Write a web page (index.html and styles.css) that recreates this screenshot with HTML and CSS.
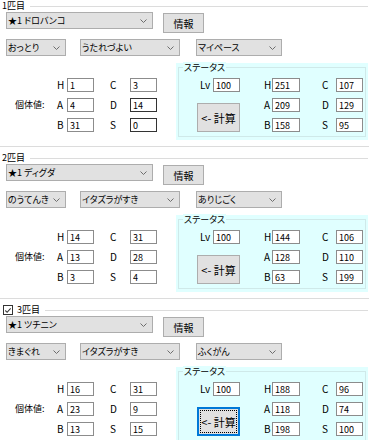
FILE: index.html
```html
<!DOCTYPE html>
<html lang="ja">
<head>
    <meta charset="UTF-8">
    <meta name="viewport" content="width=device-width, initial-scale=1.0">
    <title>パーティ</title>
    <link rel="stylesheet" href="styles.css">
</head>

<body>
    <!-- 1匹目 -->
    <section class="slot">
        <div class="slot-title"><span class="slot-name">1匹目</span></div>
        <div class="row-main">
            <div class="combo combo-name"><span>★1 ドロバンコ</span><svg class="chev" width="7" height="4" viewBox="0 0 7 4"><polyline points="0.5,0.5 3.5,3.5 6.5,0.5"/></svg></div>
            <button class="btn-info">情報</button>
        </div>
        <div class="row-sub">
            <div class="combo combo-nature"><span>おっとり</span><svg class="chev" width="7" height="4" viewBox="0 0 7 4"><polyline points="0.5,0.5 3.5,3.5 6.5,0.5"/></svg></div>
            <div class="combo combo-ability"><span>うたれづよい</span><svg class="chev" width="7" height="4" viewBox="0 0 7 4"><polyline points="0.5,0.5 3.5,3.5 6.5,0.5"/></svg></div>
            <div class="combo combo-trait"><span>マイペース</span><svg class="chev" width="7" height="4" viewBox="0 0 7 4"><polyline points="0.5,0.5 3.5,3.5 6.5,0.5"/></svg></div>
        </div>
        <div class="row-stats">
            <div class="ivs">
                <span class="ivs-label">個体値:</span>
                <div class="iv-col">
                    <label class="pair"><span class="key">H</span><input type="text" value="1"></label>
                    <label class="pair"><span class="key">A</span><input type="text" value="4"></label>
                    <label class="pair"><span class="key">B</span><input type="text" value="31"></label>
                </div>
                <div class="iv-col iv-col-right">
                    <label class="pair"><span class="key">C</span><input type="text" value="3"></label>
                    <label class="pair"><span class="key">D</span><input type="text" class="dark" value="14"></label>
                    <label class="pair"><span class="key">S</span><input type="text" class="dark" value="0"></label>
                </div>
            </div>
            <div class="status">
                <span class="status-title">ステータス</span>
                <div class="status-lv">
                    <label class="pair"><span class="key">Lv</span><input type="text" value="100"></label>
                    <button class="btn-calc">&lt;- 計算</button>
                </div>
                <div class="stat-col">
                    <label class="pair"><span class="key">H</span><input type="text" value="251"></label>
                    <label class="pair"><span class="key">A</span><input type="text" value="209"></label>
                    <label class="pair"><span class="key">B</span><input type="text" value="158"></label>
                </div>
                <div class="stat-col stat-col-right">
                    <label class="pair"><span class="key">C</span><input type="text" value="107"></label>
                    <label class="pair"><span class="key">D</span><input type="text" value="129"></label>
                    <label class="pair"><span class="key">S</span><input type="text" value="95"></label>
                </div>
            </div>
        </div>
    </section>

    <!-- 2匹目 -->
    <section class="slot">
        <div class="slot-title"><span class="slot-name">2匹目</span></div>
        <div class="row-main">
            <div class="combo combo-name"><span>★1 ディグダ</span><svg class="chev" width="7" height="4" viewBox="0 0 7 4"><polyline points="0.5,0.5 3.5,3.5 6.5,0.5"/></svg></div>
            <button class="btn-info">情報</button>
        </div>
        <div class="row-sub">
            <div class="combo combo-nature"><span>のうてんき</span><svg class="chev" width="7" height="4" viewBox="0 0 7 4"><polyline points="0.5,0.5 3.5,3.5 6.5,0.5"/></svg></div>
            <div class="combo combo-ability"><span>イタズラがすき</span><svg class="chev" width="7" height="4" viewBox="0 0 7 4"><polyline points="0.5,0.5 3.5,3.5 6.5,0.5"/></svg></div>
            <div class="combo combo-trait"><span>ありじごく</span><svg class="chev" width="7" height="4" viewBox="0 0 7 4"><polyline points="0.5,0.5 3.5,3.5 6.5,0.5"/></svg></div>
        </div>
        <div class="row-stats">
            <div class="ivs">
                <span class="ivs-label">個体値:</span>
                <div class="iv-col">
                    <label class="pair"><span class="key">H</span><input type="text" value="14"></label>
                    <label class="pair"><span class="key">A</span><input type="text" value="13"></label>
                    <label class="pair"><span class="key">B</span><input type="text" value="3"></label>
                </div>
                <div class="iv-col iv-col-right">
                    <label class="pair"><span class="key">C</span><input type="text" value="31"></label>
                    <label class="pair"><span class="key">D</span><input type="text" value="28"></label>
                    <label class="pair"><span class="key">S</span><input type="text" value="4"></label>
                </div>
            </div>
            <div class="status">
                <span class="status-title">ステータス</span>
                <div class="status-lv">
                    <label class="pair"><span class="key">Lv</span><input type="text" value="100"></label>
                    <button class="btn-calc">&lt;- 計算</button>
                </div>
                <div class="stat-col">
                    <label class="pair"><span class="key">H</span><input type="text" value="144"></label>
                    <label class="pair"><span class="key">A</span><input type="text" value="128"></label>
                    <label class="pair"><span class="key">B</span><input type="text" value="63"></label>
                </div>
                <div class="stat-col stat-col-right">
                    <label class="pair"><span class="key">C</span><input type="text" value="106"></label>
                    <label class="pair"><span class="key">D</span><input type="text" value="110"></label>
                    <label class="pair"><span class="key">S</span><input type="text" value="199"></label>
                </div>
            </div>
        </div>
    </section>

    <!-- 3匹目 -->
    <section class="slot">
        <div class="slot-title">
            <span class="check"><svg width="9" height="9" viewBox="0 0 9 9"><polyline points="1.5,4.5 3.5,6.5 7.5,2"/></svg></span>
            <span class="slot-name">3匹目</span>
        </div>
        <div class="row-main">
            <div class="combo combo-name"><span>★1 ツチニン</span><svg class="chev" width="7" height="4" viewBox="0 0 7 4"><polyline points="0.5,0.5 3.5,3.5 6.5,0.5"/></svg></div>
            <button class="btn-info">情報</button>
        </div>
        <div class="row-sub">
            <div class="combo combo-nature"><span>きまぐれ</span><svg class="chev" width="7" height="4" viewBox="0 0 7 4"><polyline points="0.5,0.5 3.5,3.5 6.5,0.5"/></svg></div>
            <div class="combo combo-ability"><span>イタズラがすき</span><svg class="chev" width="7" height="4" viewBox="0 0 7 4"><polyline points="0.5,0.5 3.5,3.5 6.5,0.5"/></svg></div>
            <div class="combo combo-trait"><span>ふくがん</span><svg class="chev" width="7" height="4" viewBox="0 0 7 4"><polyline points="0.5,0.5 3.5,3.5 6.5,0.5"/></svg></div>
        </div>
        <div class="row-stats">
            <div class="ivs">
                <span class="ivs-label">個体値:</span>
                <div class="iv-col">
                    <label class="pair"><span class="key">H</span><input type="text" value="16"></label>
                    <label class="pair"><span class="key">A</span><input type="text" value="23"></label>
                    <label class="pair"><span class="key">B</span><input type="text" value="13"></label>
                </div>
                <div class="iv-col iv-col-right">
                    <label class="pair"><span class="key">C</span><input type="text" value="31"></label>
                    <label class="pair"><span class="key">D</span><input type="text" value="9"></label>
                    <label class="pair"><span class="key">S</span><input type="text" value="15"></label>
                </div>
            </div>
            <div class="status">
                <span class="status-title">ステータス</span>
                <div class="status-lv">
                    <label class="pair"><span class="key">Lv</span><input type="text" value="100"></label>
                    <button class="btn-calc focused">&lt;- 計算</button>
                </div>
                <div class="stat-col">
                    <label class="pair"><span class="key">H</span><input type="text" value="188"></label>
                    <label class="pair"><span class="key">A</span><input type="text" value="118"></label>
                    <label class="pair"><span class="key">B</span><input type="text" value="198"></label>
                </div>
                <div class="stat-col stat-col-right">
                    <label class="pair"><span class="key">C</span><input type="text" value="96"></label>
                    <label class="pair"><span class="key">D</span><input type="text" value="74"></label>
                    <label class="pair"><span class="key">S</span><input type="text" value="100"></label>
                </div>
            </div>
        </div>
    </section>
</body>
</html>
```

FILE: styles.css
```css
body {
    margin: 0;
    background: #fff;
    color: #000;
    font-family: "Noto Sans CJK JP", "Noto Sans", sans-serif;
    font-size: 9px;
    font-feature-settings: "palt";
    overflow: hidden;
}

.slot {
    height: 147px;
    box-sizing: border-box;
    padding-bottom: 6px;
    border-bottom: 1px solid #dcdcdc;
    margin-bottom: 5px;
}

.slot-title {
    display: flex;
    align-items: center;
    height: 12px;
    padding-left: 2px;
}

.slot-title::after {
    content: "";
    flex: 1;
    height: 0;
    border-top: 1px solid #dcdcdc;
    margin: 0 1px 0 5px;
}

.slot-name {
    line-height: 12px;
}

.check {
    width: 10px;
    height: 10px;
    box-sizing: border-box;
    border: 1px solid #333;
    background: #fff;
    margin: 0 4px 0 1px;
    display: flex;
    align-items: center;
    justify-content: center;
}

.check svg {
    fill: none;
    stroke: #333;
    stroke-width: 1.2;
}

.row-main,
.row-sub {
    display: flex;
    align-items: flex-start;
    padding-left: 6px;
}

.row-main {
    gap: 10px;
    height: 21px;
}

.row-sub {
    margin-top: 6px;
}

.combo {
    height: 17px;
    box-sizing: border-box;
    border: 1px solid #adadad;
    background: #e1e1e1;
    display: flex;
    align-items: center;
    justify-content: space-between;
    padding: 0 5px 0 1px;
    white-space: nowrap;
}

.chev {
    flex: none;
    fill: none;
    stroke: #6d6d6d;
    stroke-width: 1;
}

.combo-name { width: 147px; }
.combo-nature { width: 60px; }
.combo-ability { width: 100px; margin-left: 14px; }
.combo-trait { width: 86px; margin-left: 16px; }

button {
    font-family: inherit;
    font-feature-settings: "palt";
    color: #000;
    background: #e1e1e1;
    border: 1px solid #adadad;
    padding: 0;
    margin: 0;
}

.btn-info {
    width: 41px;
    height: 20px;
    margin-top: 1px;
    font-size: 10px;
}

.row-stats {
    display: flex;
    margin-top: 7px;
}

.ivs {
    width: 176px;
    display: flex;
    align-items: flex-start;
    padding: 15px 0 0 15px;
    box-sizing: border-box;
}

.ivs-label {
    width: 42px;
    margin-top: 20px;
    line-height: 14px;
}

.iv-col,
.stat-col {
    display: flex;
    flex-direction: column;
    gap: 6px;
}

.iv-col-right {
    margin-left: 16px;
}

.iv-col-right .key {
    width: 20px;
}

.pair {
    display: flex;
    align-items: center;
    height: 14px;
}

.key {
    width: 10px;
    font-size: 10px;
    line-height: 14px;
}

input {
    width: 27px;
    height: 14px;
    box-sizing: border-box;
    border: 1px solid #8c8c8c;
    padding: 0 0 0 2px;
    margin: 0;
    font-family: inherit;
    font-size: 9px;
    line-height: 12px;
    color: #000;
    background: #fff;
    outline: none;
}

input.dark {
    border-color: #333;
}

.status {
    position: relative;
    width: 192px;
    height: 77px;
    background: #e0ffff;
    display: flex;
    align-items: flex-start;
    padding: 15px 0 0 21px;
    box-sizing: border-box;
}

.status::before {
    content: "";
    position: absolute;
    top: 4px;
    left: 2px;
    right: 2px;
    bottom: 3px;
    border: 1px solid #cfe9e9;
}

.status-title {
    position: absolute;
    top: -1px;
    left: 7px;
    padding: 0 1px;
    line-height: 12px;
    background: #e0ffff;
}

.status-lv {
    width: 43px;
    display: flex;
    flex-direction: column;
    align-items: flex-end;
    position: relative;
}

.status-lv .key {
    width: 13px;
}

.btn-calc {
    width: 43px;
    height: 29px;
    margin-top: 11px;
    font-size: 11px;
}

.btn-calc.focused {
    border: 2px solid #0078d7;
    outline: 1px dotted #000;
    outline-offset: -4px;
}

.stat-col {
    margin-left: 24px;
    position: relative;
}

.stat-col .key {
    width: 8px;
}

.stat-col input {
    width: 28px;
}

.stat-col-right {
    margin-left: 22px;
}

.stat-col-right .key {
    width: 14px;
}

.stat-col-right input {
    width: 27px;
}
```
